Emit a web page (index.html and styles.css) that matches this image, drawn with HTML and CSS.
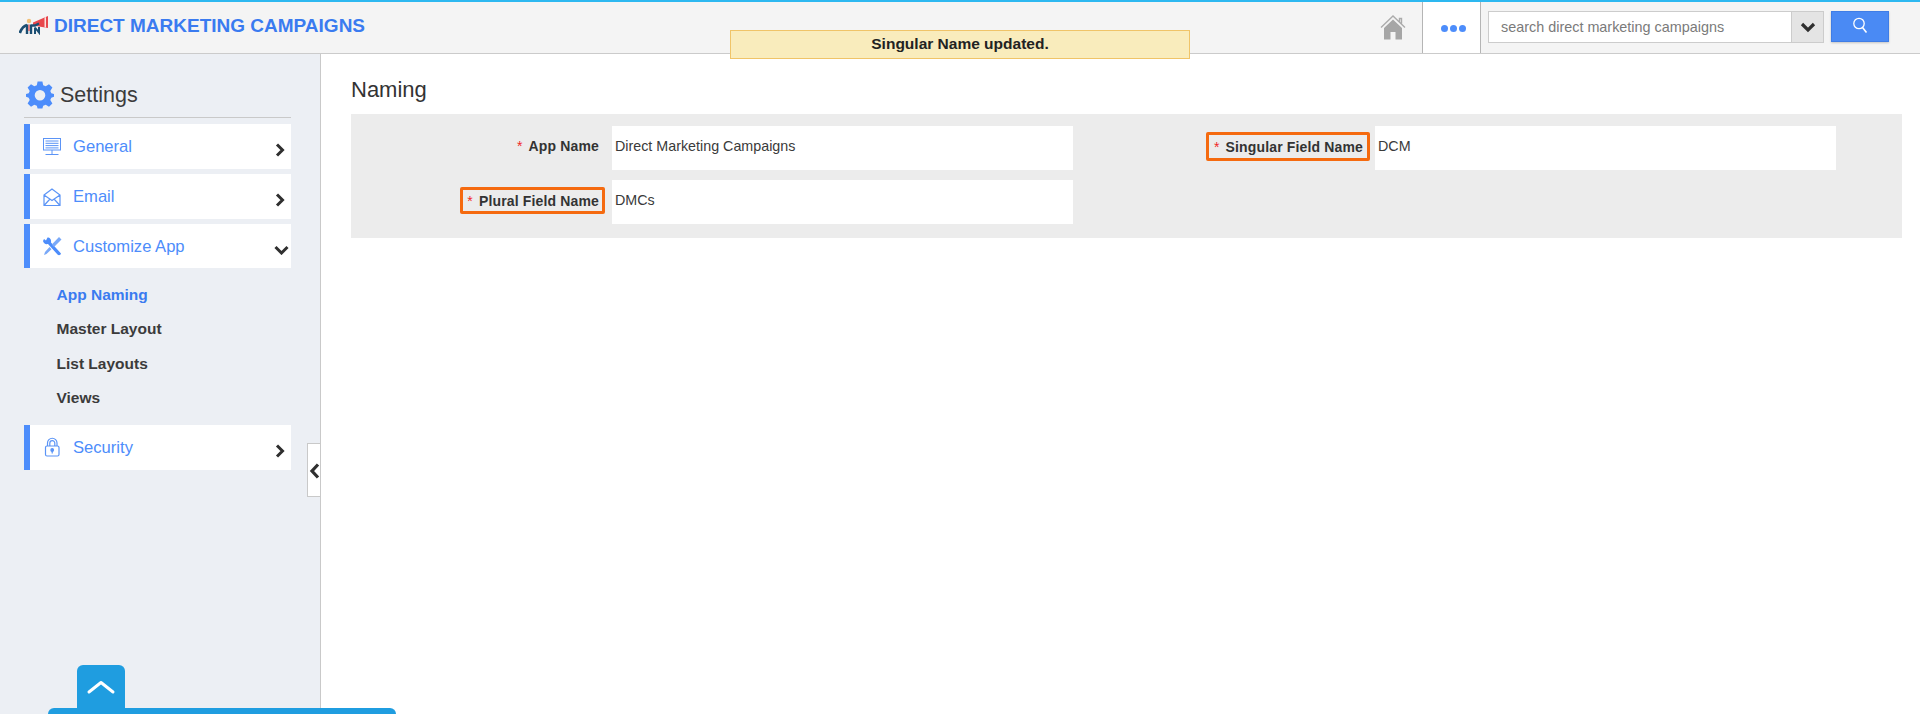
FILE: index.html
```html
<!DOCTYPE html>
<html lang="en">
<head>
<meta charset="utf-8">
<title>Direct Marketing Campaigns - Settings</title>
<link rel="stylesheet" href="styles.css">
</head>
<body>
<header class="topbar">
  <div class="brand">
    <svg class="logo" viewBox="0 0 30 20" width="30" height="20">
      <path d="M14 7.500 29 1V13L14 10.500Z" fill="#e8474c"/>
      <path d="M25.500 2.500 27 1.900V12.600L25.500 12.400Z" fill="#fbe3e0"/>
      <circle cx="10" cy="6" r="2.200" fill="#f2c078"/>
      <path d="M0.800 18C2.500 13.500 4.500 11 8 10" fill="none" stroke="#1b4e72" stroke-width="2.800"/>
      <path d="M8 9.500V19M12 9.500V19M12 10.500H16L20 8.500" fill="none" stroke="#1b4e72" stroke-width="2.400"/>
      <path d="M16 12.500V19M16 12.500 20 17.500V12" fill="none" stroke="#1b4e72" stroke-width="2"/>
      <path d="M10 9.500V16" stroke="#e8474c" stroke-width="1.200"/>
    </svg>
    <span class="brand-name">DIRECT MARKETING CAMPAIGNS</span>
  </div>
  <div class="top-actions">
    <svg class="home" viewBox="0 0 26 25" width="26" height="25">
      <path d="M1 12.500 13 1 25 12.500M19.500 6.800V3.500H21.500V8.500" fill="none" stroke="#ababab" stroke-width="1.400"/>
      <path d="M13 4.500 4 13V24.500H10.500V17H15.500V24.500H22V13Z" fill="#a6a6a6"/>
    </svg>
    <div class="more">
      <span class="dot"></span><span class="dot"></span><span class="dot"></span>
    </div>
    <div class="search">
      <div class="search-box">search direct marketing campaigns</div>
      <div class="search-drop">
        <svg viewBox="0 0 16 11" width="16" height="11"><path d="M2 2 8 8 14 2" fill="none" stroke="#2f2f2f" stroke-width="3.200"/></svg>
      </div>
    </div>
    <button class="search-btn" type="button" aria-label="Search">
      <svg viewBox="0 0 16 16" width="16" height="16"><circle cx="7" cy="6.500" r="5.200" fill="none" stroke="#fff" stroke-width="1.300"/><path d="M10.500 10.500 14.500 15.500" stroke="#fff" stroke-width="1.600"/></svg>
    </button>
  </div>
</header>

<div class="toast">Singular Name updated.</div>

<div class="layout">
  <aside class="sidebar">
    <div class="side-title">
      <svg class="gear" viewBox="0 0 28 28" width="28" height="28">
        <path fill="#4d8dfb" fill-rule="evenodd" d="M11.600 0.500H16.400L17.200 4.300 19.700 5.300 23 3.200 26.400 6.600 24.300 9.900 25.300 12.200 28 13V15.800L25.300 16.700 24.300 19.100 26.400 22.400 23 25.800 19.700 23.700 17.200 24.700 16.400 27.500H11.600L10.800 24.700 8.300 23.700 5 25.800 1.600 22.400 3.700 19.100 2.700 16.700 0 15.800V13L2.700 12.200 3.700 9.900 1.600 6.600 5 3.200 8.300 5.300 10.800 4.300ZM14 9A5.300 5.300 0 1 0 14 19.600 5.300 5.300 0 1 0 14 9Z"/>
      </svg>
      <span>Settings</span>
    </div>
    <nav class="menu">
      <a class="menu-item">
        <svg class="mi" viewBox="0 0 20 20" width="20" height="20" fill="none" stroke="#5b94f6" stroke-width="1">
          <rect x="1.500" y="1.500" width="17" height="11.500"/><path d="M3.500 4H16.500M3.500 6.300H16.500M3.500 8.600H16.500M3.500 10.900H16.500M10 13V17M3.500 17.500H16.500"/>
        </svg>
        <span class="ml">General</span>
        <svg class="chev" viewBox="0 0 10 14" width="10" height="14"><path d="M2 1.500 7.500 7 2 12.500" fill="none" stroke="#2f2f2f" stroke-width="3"/></svg>
      </a>
      <a class="menu-item">
        <svg class="mi" viewBox="0 0 20 20" width="20" height="20" fill="none" stroke="#5b94f6" stroke-width="1.200">
          <path d="M2 8 10 2 18 8V18.500H2ZM2 8 10 13.500 18 8M2 18.500 8 12M18 18.500 12 12"/>
        </svg>
        <span class="ml">Email</span>
        <svg class="chev" viewBox="0 0 10 14" width="10" height="14"><path d="M2 1.500 7.500 7 2 12.500" fill="none" stroke="#2f2f2f" stroke-width="3"/></svg>
      </a>
      <a class="menu-item menu-open">
        <svg class="mi" viewBox="0 0 20 20" width="20" height="20">
          <path d="M5.500 1.500 4 4.500 2 3 1 5C1.500 7.500 3.500 8.500 6 8L15.500 18.500C16.500 19.500 18.500 19.500 19 17.500L9 6.500C9.500 3.500 8 1.500 5.500 1.500Z" fill="#4d8dfb"/>
          <path d="M17 1 19.500 3.500 12 11 9.800 8.500ZM7.500 11 9.500 13.200 4.500 18 2 19 3 16Z" fill="#7aa9f8"/>
        </svg>
        <span class="ml">Customize App</span>
        <svg class="chev-d" viewBox="0 0 15 10" width="15" height="10"><path d="M1.500 2 7.500 8 13.500 2" fill="none" stroke="#2f2f2f" stroke-width="3"/></svg>
      </a>
      <ul class="submenu">
        <li class="active">App Naming</li>
        <li>Master Layout</li>
        <li>List Layouts</li>
        <li>Views</li>
      </ul>
      <a class="menu-item">
        <svg class="mi" viewBox="0 0 20 20" width="20" height="20" fill="none" stroke="#5b94f6" stroke-width="1.200">
          <rect x="3.500" y="9" width="13.500" height="10" rx="1.500"/><path d="M5.500 9V6A4.700 4.700 0 0 1 15 6V9M7.800 9V6.200A2.500 2.500 0 0 1 12.800 6.200V9"/><circle cx="10.200" cy="13" r="1.300" fill="#5b94f6"/><path d="M10.200 13V16.500"/>
        </svg>
        <span class="ml">Security</span>
        <svg class="chev" viewBox="0 0 10 14" width="10" height="14"><path d="M2 1.500 7.500 7 2 12.500" fill="none" stroke="#2f2f2f" stroke-width="3"/></svg>
      </a>
    </nav>
    <div class="collapse">
      <svg viewBox="0 0 11 16" width="11" height="16"><path d="M9 1.500 3 8 9 14.500" fill="none" stroke="#2f2f2f" stroke-width="3.200"/></svg>
    </div>
  </aside>
  <main class="content">
    <h1 class="page-title">Naming</h1>
    <section class="panel">
      <div class="field">
        <div class="label"><span class="tag"><i>*</i>App Name</span></div>
        <div class="value">Direct Marketing Campaigns</div>
      </div>
      <div class="field">
        <div class="label"><span class="tag hl hl-s"><i>*</i>Singular Field Name</span></div>
        <div class="value">DCM</div>
      </div>
      <div class="field">
        <div class="label"><span class="tag hl hl-p"><i>*</i>Plural Field Name</span></div>
        <div class="value">DMCs</div>
      </div>
    </section>
  </main>
</div>

<div class="dock">
  <div class="dock-tab">
    <svg viewBox="0 0 30 16" width="30" height="16"><path d="M3 13 15 3.500 27 13" fill="none" stroke="#fff" stroke-width="3" stroke-linecap="round" stroke-linejoin="round"/></svg>
  </div>
  <div class="dock-bar"></div>
</div>
</body>
</html>
```

FILE: styles.css
```css
* { box-sizing: border-box; }
html, body { margin: 0; height: 714px; overflow: hidden; }
body {
  position: relative;
  display: flex;
  flex-direction: column;
  font-family: "Liberation Sans", Arial, sans-serif;
  color: #333;
  background: #fff;
}

/* top bar */
.topbar {
  flex: none;
  height: 54px;
  display: flex;
  justify-content: space-between;
  background: #f4f4f4;
  border-top: 2px solid #2db8f0;
  border-bottom: 1px solid #cbcbcb;
}
.brand { display: flex; align-items: flex-start; padding: 13px 0 0 19px; }
.logo { margin-right: 5px; }
.brand-name {
  font-size: 19px;
  line-height: 22px;
  font-weight: 700;
  color: #3a7bf0;
}
.top-actions { display: flex; align-items: stretch; padding-right: 31px; }
.home { align-self: flex-start; margin: 13px 16px 0 0; }
.more {
  width: 59px;
  display: flex;
  align-items: center;
  justify-content: center;
  gap: 1.500px;
  padding: 2px 0 0 4px;
  background: #fff;
  border-left: 1px solid #b5b5b5;
  border-right: 1px solid #b5b5b5;
}
.dot { width: 7.500px; height: 7.500px; border-radius: 50%; background: #4d8dfb; }
.search {
  display: flex;
  height: 32px;
  margin: 9px 7px 0 7px;
  border: 1px solid #ccc;
}
.search-box {
  width: 302px;
  padding-left: 12px;
  background: #fff;
  font-size: 14.400px;
  line-height: 30px;
  color: #7a7a7a;
}
.search-drop {
  width: 32px;
  display: flex;
  align-items: center;
  justify-content: center;
  background: #e4e4e4;
  border-left: 1px solid #ccc;
}
.search-btn {
  width: 58px;
  height: 31px;
  margin-top: 9px;
  padding: 0 0 3px;
  display: flex;
  align-items: center;
  justify-content: center;
  background: #4a8af4;
  border: 1px solid #3f7de6;
  box-shadow: 0 1px 2px rgba(0, 0, 0, 0.2);
}

/* toast */
.toast {
  position: absolute;
  left: 730px;
  top: 30px;
  width: 460px;
  height: 29px;
  background: #f9ecbc;
  border: 1px solid #f0c468;
  text-align: center;
  font-size: 15.500px;
  line-height: 26px;
  font-weight: 700;
  color: #222;
}

/* layout */
.layout { flex: 1; display: flex; min-height: 0; }
.sidebar {
  position: relative;
  flex: none;
  width: 321px;
  padding-left: 24px;
  background: #eceff4;
  border-right: 1px solid #c9c9c9;
}
.side-title {
  width: 267px;
  height: 64px;
  padding: 27px 0 0 2px;
  display: flex;
  align-items: flex-start;
  gap: 6px;
  border-bottom: 1px solid #c9c9c9;
  font-size: 21.500px;
  line-height: 28px;
  color: #3b3b3b;
}
.menu { width: 267px; padding-top: 6px; }
.menu-item {
  height: 45px;
  margin-bottom: 5px;
  display: flex;
  align-items: center;
  background: #fff;
  border-left: 6px solid #4d8dfb;
  padding-left: 12px;
  color: #4d8dfb;
}
.menu-open { height: 44px; margin-bottom: 10px; }
.mi { flex: none; margin-right: 11px; }
.ml { flex: 1; margin-top: 1px; font-size: 16.600px; line-height: 20px; }
.chev { margin: 7px 6px 0 0; }
.chev-d { margin: 7px 2px 0 0; }
.submenu {
  list-style: none;
  margin: 0 0 9px;
  padding: 0 0 0 32.500px;
  font-size: 15.500px;
  font-weight: 700;
  color: #3b3b3b;
}
.submenu li { height: 34.400px; line-height: 34.400px; }
.submenu .active { color: #3a7bf0; }
.collapse {
  position: absolute;
  left: 307px;
  top: 389px;
  width: 13px;
  height: 54px;
  padding: 2px 0 0 1px;
  display: flex;
  align-items: center;
  overflow: hidden;
  background: #fff;
  border: 1px solid #c9c9c9;
  border-right: 0;
}

/* main */
.content { flex: 1; min-width: 0; padding: 22px 18px 0 30px; }
.page-title {
  margin: 0 0 10px;
  font-size: 22px;
  line-height: 28px;
  font-weight: 400;
  color: #333;
}
.panel {
  height: 124px;
  padding: 12px 0 0;
  display: grid;
  grid-template-columns: 763px 1fr;
  row-gap: 10px;
  align-content: start;
  background: #ececec;
}
.field { display: grid; grid-template-columns: 261px 461px; height: 44px; }
.label { display: flex; justify-content: flex-end; align-items: flex-start; }
.tag {
  margin: 12px 13px 0 0;
  font-size: 14px;
  line-height: 16px;
  font-weight: 700;
  letter-spacing: 0.150px;
  color: #333;
  white-space: nowrap;
}
.tag i { margin-right: 6px; font-style: normal; font-weight: 400; color: #f02828; }
.hl {
  border: 3px solid #f56a0f;
  border-radius: 2px;
}
.hl-s { margin: 6px 5px 0 0; padding: 4px 4px 3px 5px; }
.hl-p { margin: 7px 7px 0 0; padding: 2.500px 3px 2.500px 4px; }
.value {
  padding: 12px 0 0 3px;
  background: #fff;
  font-size: 14.300px;
  line-height: 17px;
  color: #3a3a3a;
}

/* bottom dock */
.dock {
  position: absolute;
  left: 48px;
  bottom: 0;
  width: 348px;
}
.dock-tab {
  width: 48px;
  height: 43px;
  margin-left: 29px;
  padding-top: 14px;
  display: flex;
  justify-content: center;
  align-items: flex-start;
  background: #1f9de0;
  border-radius: 6px 6px 0 0;
}
.dock-bar { height: 6px; background: #1f9de0; border-radius: 6px 6px 0 0; }
```
